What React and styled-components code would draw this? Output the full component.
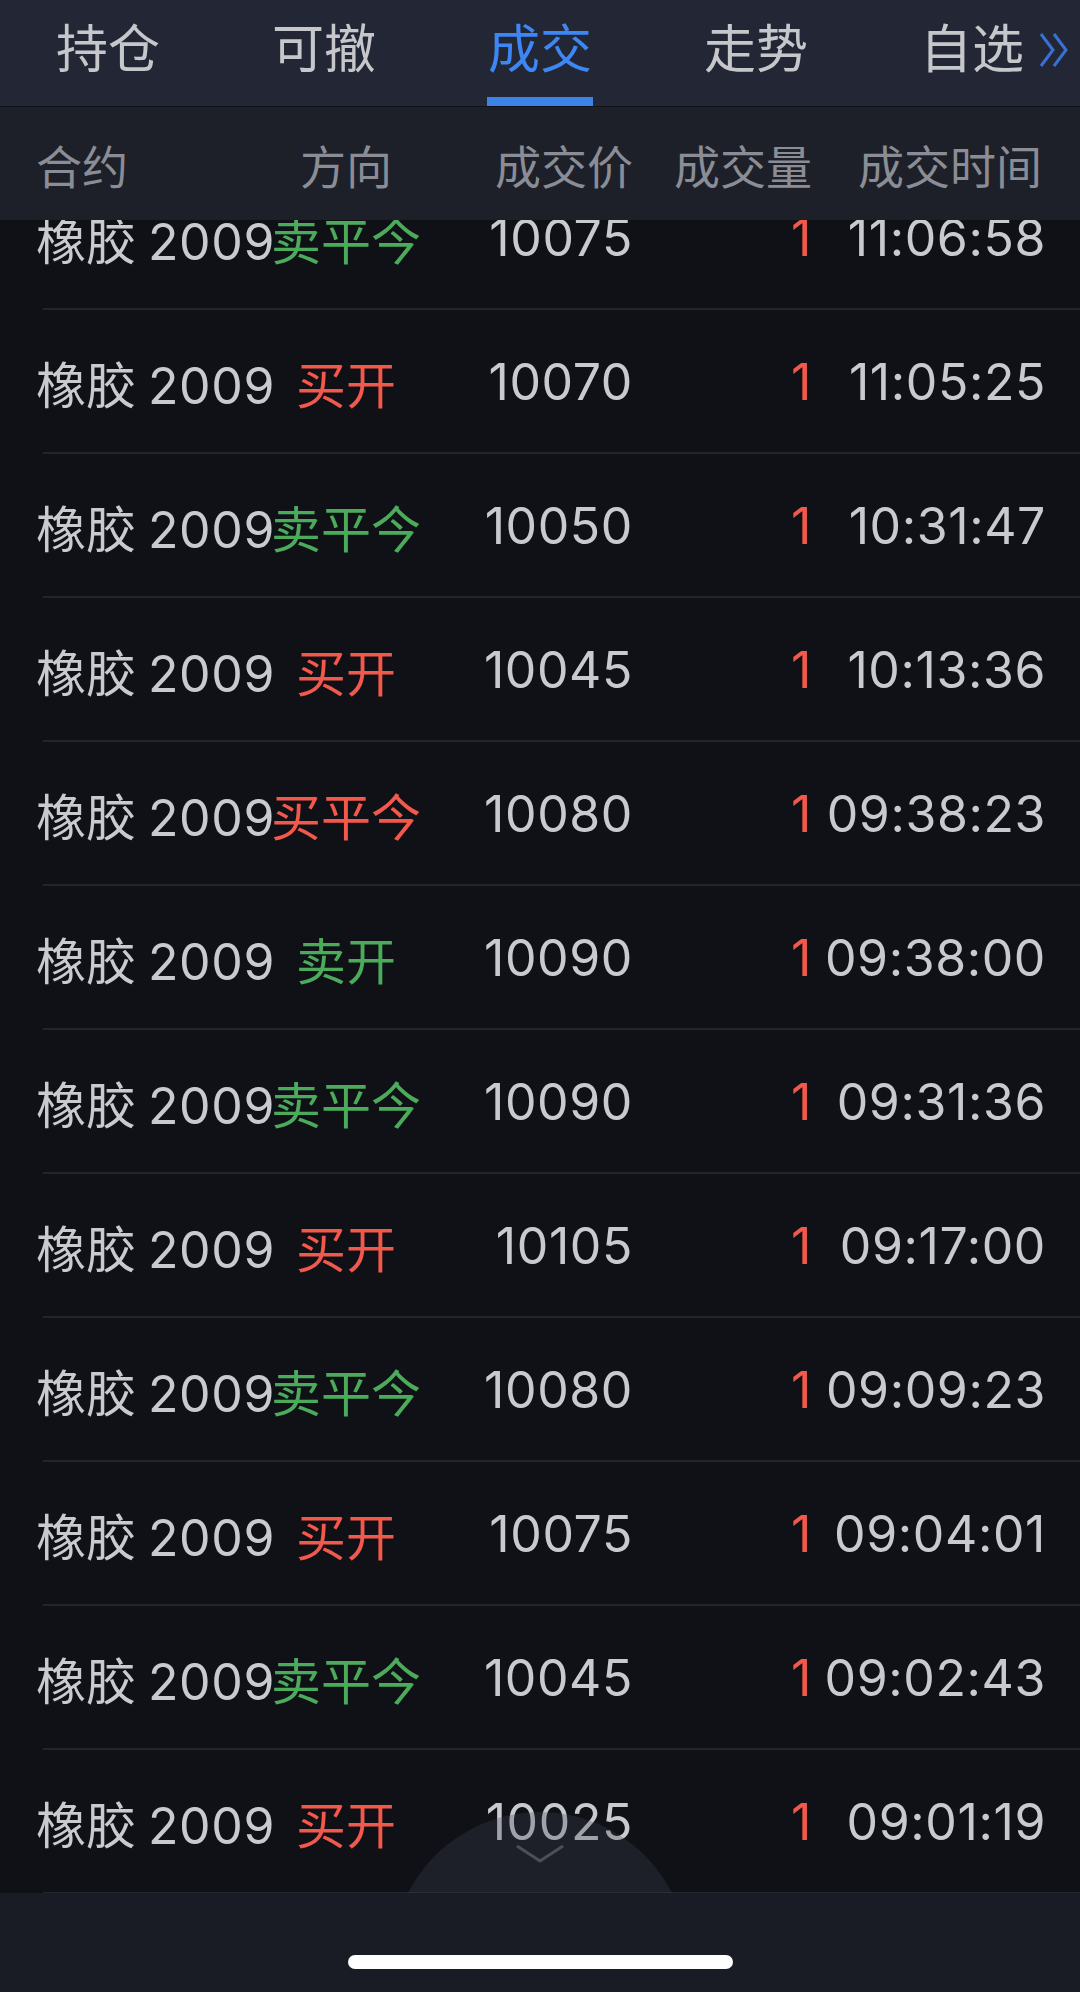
import React from "react"
import styled, { createGlobalStyle } from "styled-components"

const GlobalStyle = createGlobalStyle`
  html, body {
    margin: 0;
    padding: 0;
    background: #0f1117;
  }
  body {
    font-family: Inter, "Noto Sans CJK SC", sans-serif;
  }
`

const trades = [
  { side: "卖平今", price: "10075", qty: 1, time: "11:06:58" },
  { side: "买开", price: "10070", qty: 1, time: "11:05:25" },
  { side: "卖平今", price: "10050", qty: 1, time: "10:31:47" },
  { side: "买开", price: "10045", qty: 1, time: "10:13:36" },
  { side: "买平今", price: "10080", qty: 1, time: "09:38:23" },
  { side: "卖开", price: "10090", qty: 1, time: "09:38:00" },
  { side: "卖平今", price: "10090", qty: 1, time: "09:31:36" },
  { side: "买开", price: "10105", qty: 1, time: "09:17:00" },
  { side: "卖平今", price: "10080", qty: 1, time: "09:09:23" },
  { side: "买开", price: "10075", qty: 1, time: "09:04:01" },
  { side: "卖平今", price: "10045", qty: 1, time: "09:02:43" },
  { side: "买开", price: "10025", qty: 1, time: "09:01:19" },
]

const tabs = ["持仓", "可撤", "成交", "走势", "自选"]

const Screen = styled.div`
  width: 1080px;
  height: 1992px;
  display: flex;
  flex-direction: column;
  overflow: hidden;
  background: #0f1117;
`

const TabBar = styled.div`
  height: 106px;
  flex: none;
  display: grid;
  grid-template-columns: repeat(5, 1fr);
  background: #232735;
  border-bottom: 1px solid #101218;
`

const Tab = styled.div`
  display: flex;
  flex-direction: column;
  align-items: center;
  padding-top: 18px;
  font-size: 52px;
  line-height: 64px;
  color: ${(p) => (p.active ? "#3d87f4" : "#c6c7cb")};
`

const TabLabel = styled.span`
  display: inline-flex;
  align-items: center;
`

const MoreArrow = styled.svg`
  width: 32px;
  height: 38px;
  margin-left: 14px;
  margin-right: -46px;
`

const Underline = styled.div`
  margin-top: auto;
  width: 106px;
  height: 9px;
  background: ${(p) => (p.active ? "#3d82e8" : "transparent")};
`

const columns = "grid-template-columns: 200px 220px 177px 179px 1fr;"

const HeaderRow = styled.div`
  height: 113px;
  flex: none;
  display: grid;
  ${columns}
  align-items: center;
  padding: 0 38px 0 36px;
  background: #1d2029;
  color: #8a8d95;
  font-size: 46px;
  position: relative;
  z-index: 2;
`

const Cell = styled.div`
  white-space: nowrap;
  text-align: ${(p) => p.align || "left"};
  color: ${(p) => p.color || "inherit"};
  letter-spacing: ${(p) => (p.num ? "0.6px" : "0")};
`

const Code = styled.span`
  margin-left: 12px;
  letter-spacing: 0.6px;
`

const ListViewport = styled.div`
  flex: 1;
  position: relative;
  overflow: hidden;
`

const List = styled.div`
  margin-top: -54px;
`

const Row = styled.div`
  height: 144px;
  display: grid;
  ${columns}
  align-items: center;
  padding: 0 34px 0 36px;
  box-sizing: border-box;
  background: linear-gradient(#22252e, #22252e) no-repeat 43px 100% /
    calc(100% - 43px) 2px;
  font-size: 50px;
  color: #c9cace;
`

const PullTab = styled.div`
  position: absolute;
  left: 50%;
  bottom: -215px;
  width: 296px;
  height: 296px;
  margin-left: -148px;
  border-radius: 50%;
  background: rgba(64, 68, 80, 0.3);
  display: flex;
  justify-content: center;
  padding-top: 32px;
  box-sizing: border-box;
  pointer-events: none;
`

const BottomBar = styled.div`
  height: 99px;
  flex: none;
  background: #191c24;
  display: flex;
  justify-content: center;
  padding-top: 62px;
  box-sizing: border-box;
  position: relative;
  z-index: 2;
`

const HomeIndicator = styled.div`
  width: 385px;
  height: 14px;
  border-radius: 7px;
  background: #ffffff;
`

const sideColor = (side) => (side.startsWith("买") ? "#f2594b" : "#4cab5b")

export default function App() {
  return (
    <>
      <GlobalStyle />
      <Screen>
        <TabBar>
          {tabs.map((t, i) => (
            <Tab key={t} active={i === 2}>
              <TabLabel>
                {t}
                {i === 4 && (
                  <MoreArrow viewBox="0 0 32 38" fill="none">
                    <path
                      d="M3 3 L15 19 L3 35 M16 3 L28 19 L16 35"
                      stroke="#3a6fd6"
                      strokeWidth="3"
                    />
                  </MoreArrow>
                )}
              </TabLabel>
              <Underline active={i === 2} />
            </Tab>
          ))}
        </TabBar>

        <HeaderRow>
          <Cell>合约</Cell>
          <Cell align="center">方向</Cell>
          <Cell align="right">成交价</Cell>
          <Cell align="right">成交量</Cell>
          <Cell align="right">成交时间</Cell>
        </HeaderRow>

        <ListViewport>
          <List>
            {trades.map((r, i) => (
              <Row key={i}>
                <Cell>
                  橡胶<Code>2009</Code>
                </Cell>
                <Cell align="center" color={sideColor(r.side)}>
                  {r.side}
                </Cell>
                <Cell align="right" num>
                  {r.price}
                </Cell>
                <Cell align="right" num color="#f2594b">
                  {r.qty}
                </Cell>
                <Cell align="right" num>
                  {r.time}
                </Cell>
              </Row>
            ))}
          </List>
          <PullTab>
            <svg width="50" height="20" viewBox="0 0 50 20" fill="none">
              <path d="M2 2 L25 17 L48 2" stroke="#4b4f59" strokeWidth="3" />
            </svg>
          </PullTab>
        </ListViewport>

        <BottomBar>
          <HomeIndicator />
        </BottomBar>
      </Screen>
    </>
  )
}
